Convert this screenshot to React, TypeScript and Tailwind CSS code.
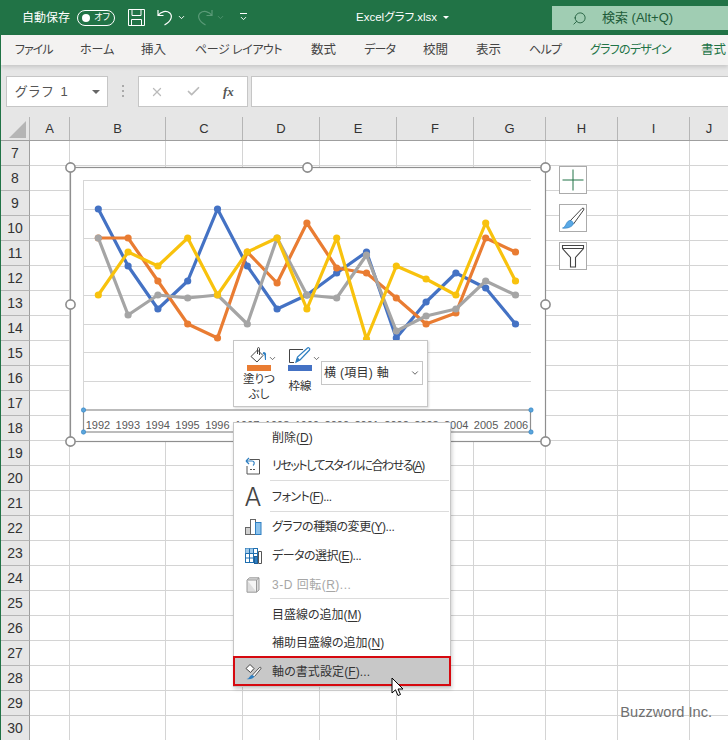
import React from 'react';
import { ChevronDown, Search, X, Check } from 'lucide-react';

const JP = "font-['Liberation_Sans','Noto_Sans_CJK_JP',sans-serif] [font-feature-settings:'palt']";

const columns = ['A', 'B', 'C', 'D', 'E', 'F', 'G', 'H', 'I', 'J'];
const rows = Array.from({ length: 24 }, (_, i) => i + 7);
const years = ['1992', '1993', '1994', '1995', '1996', '1997', '1998', '1999', '2000', '2001', '2002', '2003', '2004', '2005', '2006'];

const tabs = [
    { label: 'ファイル', cls: 'w-[37px] text-[#444] text-[12px] tracking-[-1px]' },
    { label: 'ホーム', cls: 'w-[33px] text-[#444] text-[12px]' },
    { label: '挿入', cls: 'w-[26px] text-[#444] text-[12.5px]' },
    { label: 'ページ レイアウト', cls: 'w-[88px] text-[#444] text-[12px] tracking-[-0.45px]' },
    { label: '数式', cls: 'w-[25px] text-[#444] text-[12.5px]' },
    { label: 'データ', cls: 'w-[31px] text-[#444] text-[12px] tracking-[-0.7px]' },
    { label: '校閲', cls: 'w-[25px] text-[#444] text-[12.5px]' },
    { label: '表示', cls: 'w-[25px] text-[#444] text-[12.5px]' },
    { label: 'ヘルプ', cls: 'w-[33px] text-[#444] text-[12px] tracking-[-0.7px]' },
    { label: 'グラフのデザイン', cls: 'w-[83px] text-[#217346] text-[12px] tracking-[-0.75px]' },
    { label: '書式', cls: 'w-[26px] text-[#217346] text-[12.5px]' },
];

const series = [
    { color: '#4472c4', ys: [209, 266, 309, 281, 209, 266, 309, 295, 273, 252, 338, 302, 273, 288, 324] },
    { color: '#e97c32', ys: [238, 238, 281, 324, 338, 252, 283, 223, 268, 273, 298, 324, 313, 238, 252] },
    { color: '#a5a5a5', ys: [238, 315, 295, 298, 295, 324, 238, 295, 298, 255, 331, 316, 309, 281, 295] },
    { color: '#f8c20d', ys: [295, 252, 266, 238, 295, 252, 238, 309, 238, 339, 266, 279, 295, 223, 281] },
];

const gridYs = [180, 209, 238, 266, 295, 324, 352, 381];
// chart svg origin is the chart box corner
const ORIGIN_X = 70;
const ORIGIN_Y = 167;
const px = (i: number) => 98.3 + 29.8 * i - ORIGIN_X;

const Handle: React.FC<{ x: number; y: number }> = ({ x, y }) => (
    <circle cx={x} cy={y} r={4.6} fill="#fff" stroke="#8c8c8c" strokeWidth={1.6} />
);

const ChartCanvas = () => (
    <svg width={490} height={285} className="absolute left-0 top-0 overflow-visible">
        <rect x={0.5} y={0.5} width={475} height={274} fill="#fff" stroke="#8f8f8f" strokeWidth={1.2} />
        {gridYs.map((y) => (
            <line key={y} x1={13.5} x2={461} y1={y - ORIGIN_Y + 0.5} y2={y - ORIGIN_Y + 0.5} stroke="#d6d6d6" strokeWidth={1} />
        ))}
        <line x1={13.5} x2={13.5} y1={13} y2={243} stroke="#d6d6d6" strokeWidth={1} />
        {series.map((s) => (
            <g key={s.color}>
                <polyline
                    points={s.ys.map((y, i) => `${px(i)},${y - ORIGIN_Y}`).join(' ')}
                    fill="none"
                    stroke={s.color}
                    strokeWidth={3.2}
                    strokeLinejoin="round"
                />
                {s.ys.map((y, i) => (
                    <circle key={i} cx={px(i)} cy={y - ORIGIN_Y} r={3.6} fill={s.color} />
                ))}
            </g>
        ))}
        {/* axis selection frame */}
        <rect x={13.5} y={243} width={447} height={22} fill="#fff" stroke="#8f8f8f" strokeWidth={1.2} />
        {[[13.5, 243], [461, 243], [13.5, 265], [461, 265]].map(([x, y]) => (
            <circle key={`${x}-${y}`} cx={x} cy={y} r={2.2} fill="#5aa5dc" stroke="#2f7fc1" strokeWidth={0.6} />
        ))}
        <Handle x={0.5} y={0.5} />
        <Handle x={237.5} y={0.5} />
        <Handle x={475.5} y={0.5} />
        <Handle x={0.5} y={137.5} />
        <Handle x={475.5} y={137.5} />
        <Handle x={0.5} y={274.5} />
        <Handle x={237.5} y={274.5} />
        <Handle x={475.5} y={274.5} />
    </svg>
);

const UndoIcon: React.FC<{ className?: string }> = ({ className }) => (
    <svg width={16} height={17} viewBox="0 0 16 17" className={className}>
        <path d="M1 1 V6.5 H6.5 M1 6.5 C4 2.2 9.5 1.2 12.8 4 C16 7 14.2 12.5 7.5 16" fill="none" stroke="currentColor" strokeWidth={1.2} />
    </svg>
);

const PlusIcon = () => (
    <svg width={22} height={22} viewBox="0 0 22 22">
        <path d="M11 0.5V21.5M0.5 11H21.5" stroke="#217346" strokeWidth={1} fill="none" />
    </svg>
);

const BrushIcon = () => (
    <svg width={24} height={24} viewBox="0 0 24 24">
        <path d="M9 15 L21 2.5 C22.5 1.5 23.5 2.5 22.6 4 L12.5 18" fill="#fff" stroke="#444" strokeWidth={1} />
        <path d="M1.5 22 C5 21.5 4.5 16 8.5 14.5 C10.5 14.2 12.5 16 12.3 18 C11 21 6 22.8 1.5 22 Z" fill="#5aa9e6" stroke="#2f7fc1" strokeWidth={0.7} />
    </svg>
);

const FilterIcon = () => (
    <svg width={24} height={24} viewBox="0 0 24 24">
        <path d="M1.5 1.5H22.5V4.5L14.5 13.5V23H9.5V13.5L1.5 4.5Z M1.5 4.5H22.5" fill="#fff" stroke="#444" strokeWidth={1.1} />
    </svg>
);

const FillIcon = () => (
    <svg width={20} height={18} viewBox="0 0 20 18">
        <path d="M2 9.5 L8.5 3 L14 8.5 L8 15 Z" fill="#fff" stroke="#444" strokeWidth={1} />
        <path d="M8.5 7 V1.5 C8.5 0.3 10.5 0.3 10.5 1.5 V8" fill="none" stroke="#444" strokeWidth={1} />
        <path d="M14.5 5 C16.5 5 17.5 6.5 17 8.5 L17 13 L16 13 L15.5 8 L13.5 6.5 Z" fill="#2f7fc1" />
    </svg>
);

const PenIcon = () => (
    <svg width={24} height={18} viewBox="0 0 24 18">
        <path d="M1.5 15.5 V2.5 H15 M1.5 15.5 H6" fill="none" stroke="#444" strokeWidth={1} />
        <path d="M8 15 L9.5 10 L19.5 1 C20.5 0.2 22.5 1.5 21.5 3 L12 13 Z" fill="#fff" stroke="#2f7fc1" strokeWidth={1.2} />
        <path d="M8 15.5 L12 13 L9.5 10 Z" fill="#2f7fc1" />
    </svg>
);

const ResetIcon = () => (
    <svg width={16} height={18} viewBox="0 0 16 18">
        <path d="M4.5 2.5 H14.5 V17 H2 V9" fill="#fff" stroke="#555" strokeWidth={1} />
        <path d="M1 4 L4 1 M1 4 L4 7 M1 4 H7 C9.5 4 10 7 8 8.5" fill="none" stroke="#2f7fc1" strokeWidth={1.2} />
        <path d="M5 12.5 H11" stroke="#555" strokeWidth={1} strokeDasharray="2 1" />
    </svg>
);

const BarsIcon = () => (
    <svg width={17} height={17} viewBox="0 0 17 17">
        <rect x={0.5} y={9.5} width={5} height={7} fill="#d0d0d0" stroke="#666" />
        <rect x={5.5} y={1.5} width={5} height={15} fill="#fff" stroke="#666" />
        <rect x={10.5} y={4.5} width={5.5} height={12} fill="#8dc3ec" stroke="#2f7fc1" />
    </svg>
);

const DataSelectIcon = () => (
    <svg width={17} height={16} viewBox="0 0 17 16">
        <rect x={0.5} y={0.5} width={12} height={14} fill="#fff" stroke="#1f6fb0" />
        <rect x={0.5} y={0.5} width={8} height={5} fill="#9fc9ea" />
        <path d="M4.5 0.5V14.5M8.5 0.5V14.5M0.5 5.5H12.5M0.5 10H12.5" stroke="#1f6fb0" strokeWidth={1} />
        <rect x={9.5} y={8.5} width={3} height={7} fill="#2f7fc1" stroke="#1f5f99" />
        <path d="M13.5 15.5V3.5H16.5V15.5Z" fill="#fff" stroke="#555" />
    </svg>
);

const CubeIcon = () => (
    <svg width={14} height={16} viewBox="0 0 14 16">
        <path d="M1 3 L3.5 0.8 H13 V13 L10.5 15.2 H1 Z" fill="#ddd" stroke="#9a9a9a" />
        <path d="M1 3 H10.5 V15.2" fill="#f5f5f5" stroke="#9a9a9a" />
        <path d="M10.5 3 L13 0.8" stroke="#9a9a9a" />
    </svg>
);

const FormatIcon = () => (
    <svg width={17} height={17} viewBox="0 0 17 17">
        <path d="M1 5.5 L5 1.5 L9 5.5 L5.5 9.5 Z" fill="#fff" stroke="#444" />
        <path d="M7.5 12 L14.5 4.5 C15.5 3.8 16.5 4.8 15.8 5.8 L9.5 13.5" fill="#fff" stroke="#444" strokeWidth={0.9} />
        <path d="M1.5 16 C4.5 16 4.5 12.5 7 11.8 L9.5 13.5 C8.5 15.5 5 16.8 1.5 16 Z" fill="#2f7fc1" />
    </svg>
);

const Kbd: React.FC<{ k: string }> = ({ k }) => <span className="underline underline-offset-2">{k}</span>;

const menuItems = [
    { key: 'del', h: 'h-[28px] pt-[2px]', label: '削除(', k: 'D', tail: ')', cls: '' },
    { key: 'reset', h: 'h-[30px]', icon: <ResetIcon />, label: 'リセットしてスタイルに合わせる(', k: 'A', tail: ')', sep: true, cls: 'tracking-[-1.45px]' },
    { key: 'font', h: 'h-[31px] pt-px', icon: <span className="text-[25px] font-light leading-none text-[#444] font-['Inter',sans-serif]">A</span>, label: 'フォント(', k: 'F', tail: ')...', sep: true, cls: 'tracking-[-0.5px]' },
    { key: 'type', h: 'h-[29px]', icon: <BarsIcon />, label: 'グラフの種類の変更(', k: 'Y', tail: ')...', cls: 'tracking-[-0.4px]' },
    { key: 'data', h: 'h-[29px]', icon: <DataSelectIcon />, label: 'データの選択(', k: 'E', tail: ')...', cls: 'tracking-[-0.5px]' },
    { key: '3d', h: 'h-[29px]', icon: <CubeIcon />, label: '3-D 回転(', k: 'R', tail: ')...', off: true, sep: true, cls: 'tracking-[0.5px]' },
    { key: 'grid', h: 'h-[29px] pt-[2px]', label: '目盛線の追加(', k: 'M', tail: ')', cls: '' },
    { key: 'minor', h: 'h-[28px] pt-[2px]', label: '補助目盛線の追加(', k: 'N', tail: ')', cls: '' },
];

const ContextMenu = () => (
    <div className={`absolute left-[232px] top-[422px] z-30 w-[218px] border border-[#c6c6c6] bg-white text-[12px] shadow-[1px_2px_4px_rgba(0,0,0,0.2)] ${JP}`}>
        {menuItems.map((m) => (
            <div key={m.key} className={`relative flex items-center ${m.h} ${m.off ? 'text-[#a6a6a6]' : 'text-[#333]'}`}>
                <span className="flex w-[38px] shrink-0 justify-center">{m.icon}</span>
                <span className={`whitespace-nowrap ${m.cls}`}>{m.label}<Kbd k={m.k} />{m.tail}</span>
                {m.sep && <div className="absolute bottom-0 left-[36px] right-[1px] h-px bg-[#dcdcdc]" />}
            </div>
        ))}
        <div className="-mx-px flex h-[30px] items-center border-2 border-[#d6090f] bg-[#c8c8c8] pt-px text-[#333]">
            <span className="flex w-[37px] shrink-0 justify-center"><FormatIcon /></span>
            <span className="whitespace-nowrap tracking-[0.1px]">軸の書式設定(<Kbd k="F" />)...</span>
        </div>
    </div>
);

const MiniToolbar = () => (
    <div className={`absolute left-[232px] top-[340px] z-20 flex h-[67px] w-[195px] items-start border border-[#c6c6c6] bg-white pl-[12px] shadow-[1px_1px_2px_rgba(0,0,0,0.15)] ${JP}`}>
        <div className="flex w-[26px] flex-col items-center pt-[6px] text-[11.5px] leading-[15px] text-[#333]">
            <div className="relative flex h-[18px] w-[24px] justify-center">
                <FillIcon />
                <ChevronDown size={9} strokeWidth={2} className="absolute -right-[6px] top-[7px] text-[#444]" />
            </div>
            <div className="h-[6px] w-[24px] bg-[#e97c32]" />
            <div className="mt-[1px] whitespace-nowrap text-center">塗りつ<br />ぶし</div>
        </div>
        <div className="ml-[16px] flex w-[24px] flex-col items-center pt-[6px] text-[11.5px] leading-[15px] text-[#333]">
            <div className="relative flex h-[18px] w-[24px] justify-center">
                <PenIcon />
                <ChevronDown size={9} strokeWidth={2} className="absolute -right-[9px] top-[7px] text-[#444]" />
            </div>
            <div className="h-[6px] w-[24px] bg-[#4472c4]" />
            <div className="mt-[8px] whitespace-nowrap">枠線</div>
        </div>
        <div className="ml-[9px] mt-[20px] flex h-[24px] w-[102px] items-center justify-between border border-[#c6c6c6] pl-[2px] pr-[2px] text-[12px] text-[#333]">
            <span className="whitespace-nowrap tracking-[0.3px]">横 (項目) 軸</span>
            <ChevronDown size={10} strokeWidth={2} className="text-[#444]" />
        </div>
    </div>
);

const Sheet = () => (
    <div>
        <div className="grid h-[24px] grid-cols-[29px_40px_96px_77px_77px_77px_77px_72px_72px_72px_39px] border-b border-[#9f9f9f] bg-[#e6e6e6] font-['Liberation_Sans',sans-serif] text-[13px] text-[#333]">
            <div className="relative border-r border-[#b5b5b5]">
                <div className="absolute bottom-[2px] right-[3px] h-0 w-0 border-b-[17px] border-l-[17px] border-b-[#b5b5b5] border-l-transparent" />
            </div>
            {columns.map((c) => (
                <div key={c} className="flex items-center justify-center border-r border-[#b5b5b5]">{c}</div>
            ))}
        </div>
        {rows.map((r) => (
            <div key={r} className="grid h-[25px] grid-cols-[29px_40px_96px_77px_77px_77px_77px_72px_72px_72px_39px] bg-white">
                <div className="flex items-center justify-center border-b border-r border-b-[#b5b5b5] border-r-[#9f9f9f] bg-[#e6e6e6] font-['Liberation_Sans',sans-serif] text-[14px] text-[#333]">{r}</div>
                {columns.map((c) => (
                    <div key={c} className="border-b border-r border-[#d4d4d4]" />
                ))}
            </div>
        ))}
    </div>
);

export default function App() {
    return (
        <div className={`relative h-[740px] w-[728px] overflow-hidden border-l border-[#217346] bg-[#e6e6e6] ${JP}`}>
            {/* title bar */}
            <div className="-ml-px flex h-[35px] items-center bg-[#217346] pl-[22px] text-[11.5px] text-white">
                <span className="whitespace-nowrap text-[12px]">自動保存</span>
                <div className="ml-[7px] flex h-[16px] w-[38px] items-center justify-between rounded-full border border-white pl-[4px] pr-[4px]">
                    <span className="h-[8px] w-[8px] rounded-full bg-white" />
                    <span className="text-[9px] leading-none">オフ</span>
                </div>
                <svg width={17} height={17} viewBox="0 0 17 17" className="ml-[13px]">
                    <path d="M0.5 0.5H16.5V16.5H0.5Z M4 0.5V6.5H13V0.5 M3.5 16.5V10.5H13.5V16.5" fill="none" stroke="#fff" strokeWidth={1} />
                </svg>
                <UndoIcon className="ml-[12px] text-white" />
                <ChevronDown size={9} strokeWidth={2.5} className="ml-[4px] text-white" />
                <UndoIcon className="ml-[11px] -scale-x-100 text-[#5a9a77]" />
                <ChevronDown size={9} strokeWidth={2} className="ml-[3px] text-[#5a9a77]" />
                <span className="ml-[14px] flex flex-col items-center">
                    <span className="h-px w-[7px] bg-white" />
                    <ChevronDown size={9} strokeWidth={2.5} className="text-white" />
                </span>
                <span className="ml-[108px] whitespace-nowrap">Excelグラフ.xlsx</span>
                <span className="ml-[6px] h-0 w-0 border-x-[3px] border-t-[3px] border-x-transparent border-t-white" />
                <div className="mt-[6px] ml-auto flex h-[24px] w-[176px] items-center self-start bg-[#a0cdb3] pl-[20px] text-[13px] text-[#1e5c3a]">
                    <Search size={15} strokeWidth={1.4} className="-scale-x-100 text-[#1e5c3a]" />
                    <span className="ml-[15px] whitespace-nowrap">検索 (Alt+Q)</span>
                </div>
            </div>

            {/* ribbon tabs */}
            <div className="relative z-10 flex h-[30px] items-center gap-[28px] bg-[#f3f2f1] pl-[14px] shadow-[0_2px_4px_rgba(0,0,0,0.14)]">
                {tabs.map((t) => (
                    <span key={t.label} className={`shrink-0 whitespace-nowrap ${t.cls}`}>{t.label}</span>
                ))}
            </div>

            {/* formula bar */}
            <div className="flex h-[52px] items-start pt-[11px]">
                <div className="ml-[5px] flex h-[31px] w-[102px] items-center justify-between border border-[#c6c6c6] bg-white pl-[8px] pr-[7px] text-[13px] tracking-[2px] text-[#555]">
                    <span className="whitespace-nowrap">グラフ 1</span>
                    <span className="h-0 w-0 border-x-[4px] border-t-[4px] border-x-transparent border-t-[#666]" />
                </div>
                <div className="ml-[14px] mt-[9px] flex flex-col gap-[3px]">
                    <span className="h-[2px] w-[2px] bg-[#aaa]" />
                    <span className="h-[2px] w-[2px] bg-[#aaa]" />
                    <span className="h-[2px] w-[2px] bg-[#aaa]" />
                </div>
                <div className="ml-[14px] flex h-[31px] w-[110px] items-center border border-[#c6c6c6] bg-white pl-[11px]">
                    <X size={14} strokeWidth={2.2} className="text-[#bbb]" />
                    <Check size={15} strokeWidth={2.8} className="ml-[22px] text-[#bbb]" />
                    <span className="ml-[22px] font-['Liberation_Serif',serif] text-[13px] font-bold italic text-[#555]">fx</span>
                </div>
                <div className="ml-[3px] h-[31px] flex-1 border border-r-0 border-[#c6c6c6] bg-white" />
            </div>

            <Sheet />

            {/* chart */}
            <div className="absolute left-[69px] top-[167px] z-10 h-[275px] w-[477px] font-['Liberation_Sans',sans-serif]">
                <ChartCanvas />
                <div className="absolute left-[13px] top-[248px] flex h-[20px] w-[448px] items-center text-[11px] text-[#595959]">
                    {years.map((y) => (
                        <span key={y} className="flex-1 text-center">{y}</span>
                    ))}
                </div>
            </div>

            {/* chart tools */}
            <div className="absolute left-[558px] top-[166px] z-10 flex flex-col">
                <div className="flex h-[28px] w-[28px] items-center justify-center border border-[#ababab] bg-white"><PlusIcon /></div>
                <div className="mt-[10px] flex h-[28px] w-[28px] items-center justify-center border border-[#ababab] bg-white"><BrushIcon /></div>
                <div className="mt-[10px] flex h-[28px] w-[28px] items-center justify-center border border-[#ababab] bg-white"><FilterIcon /></div>
            </div>

            <MiniToolbar />
            <ContextMenu />

            {/* mouse cursor */}
            <svg width={14} height={21} viewBox="0 0 14 21" className="absolute left-[390px] top-[677px] z-40">
                <path d="M1 1 L1 16 L4.5 12.8 L7 18.5 L9.5 17.5 L7 12 L12 12 Z" fill="#fff" stroke="#000" strokeWidth={1} />
            </svg>

            {/* watermark */}
            <span className="absolute right-[16px] top-[702px] z-40 whitespace-nowrap font-['Liberation_Sans',sans-serif] text-[14.6px] text-[#707070]">Buzzword Inc.</span>
        </div>
    );
}
